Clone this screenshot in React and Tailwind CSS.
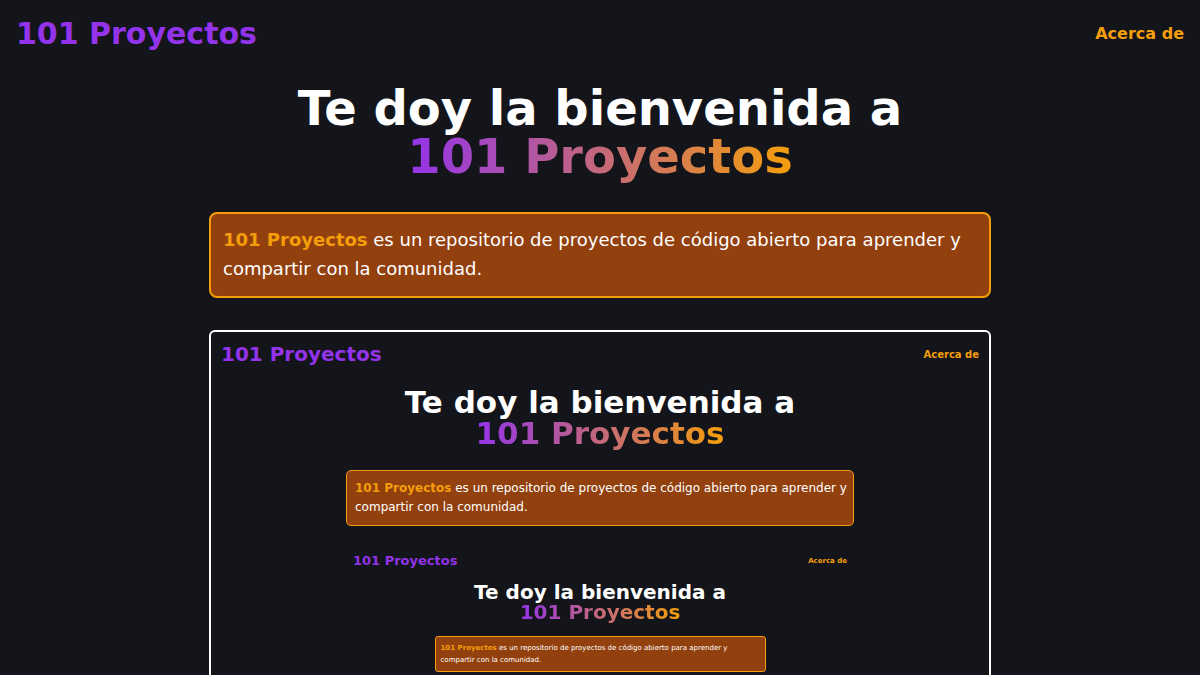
const title = 'bg-linear-to-r/srgb from-[#9333ea] to-[#f59e0b] bg-clip-text text-transparent'

export default function App() {
  return (
    <div className="h-screen overflow-y-auto bg-[#13151a] text-white [font-family:'DejaVu_Sans',sans-serif] [scrollbar-width:none]">
      <header className="flex items-center justify-between px-4 py-4">
        <a href="#inicio" className="text-[30px] leading-9 font-bold text-[#9333ea]">101 Proyectos</a>
        <a href="#acerca" className="text-base font-bold text-[#f59e0b]">Acerca de</a>
      </header>
      <main className="mx-auto max-w-[782px] pt-4 pb-8">
        <h1 className="text-center text-5xl leading-12 font-bold">
          Te doy la bienvenida a<br /><span className={title}>101 Proyectos</span>
        </h1>
        <p className="mt-8 rounded-lg border-2 border-[#f59e0b] bg-[#92400e] px-3 pt-[11px] pb-[13px] text-lg leading-[29px]">
          <strong className="text-[#f59e0b]">101 Proyectos</strong> es un repositorio de proyectos de código abierto para aprender y compartir con la comunidad.
        </p>
        <section className="mt-8 rounded-md border-2 border-white pb-8">
          <header className="flex items-center justify-between px-[10px] pt-[10px]">
            <a href="#inicio" className="text-[20px] leading-6 font-bold text-[#9333ea]">101 Proyectos</a>
            <a href="#acerca" className="text-[10px] font-bold text-[#f59e0b]">Acerca de</a>
          </header>
          <div className="mx-auto max-w-[508px] pt-[21px]">
            <h2 className="text-center text-[31px] leading-[31px] font-bold">
              Te doy la bienvenida a<br /><span className={title}>101 Proyectos</span>
            </h2>
            <p className="mt-[21px] rounded-[5px] border border-[#f59e0b] bg-[#92400e] py-2 pr-1 pl-2 text-[12px] leading-[19px]">
              <strong className="text-[#f59e0b]">101 Proyectos</strong> es un repositorio de proyectos de código abierto para aprender y compartir con la comunidad.
            </p>
            <section className="mt-5 rounded-[5px] border border-[#0e1014] pb-5">
              <header className="flex items-center justify-between px-[6px] pt-[6px]">
                <a href="#inicio" className="text-[13px] leading-4 font-bold text-[#9333ea]">101 Proyectos</a>
                <a href="#acerca" className="text-[7px] font-bold text-[#f59e0b]">Acerca de</a>
              </header>
              <div className="mx-auto max-w-[331px] pt-[13px]">
                <h3 className="text-center text-[20px] leading-5 font-bold">
                  Te doy la bienvenida a<br /><span className={title}>101 Proyectos</span>
                </h3>
                <p className="mt-[14px] rounded-[3px] border border-[#f59e0b] bg-[#92400e] p-[5px] text-[7px] leading-3">
                  <strong className="text-[#f59e0b]">101 Proyectos</strong> es un repositorio de proyectos de código abierto para aprender y compartir con la comunidad.
                </p>
              </div>
            </section>
          </div>
        </section>
      </main>
    </div>
  )
}
